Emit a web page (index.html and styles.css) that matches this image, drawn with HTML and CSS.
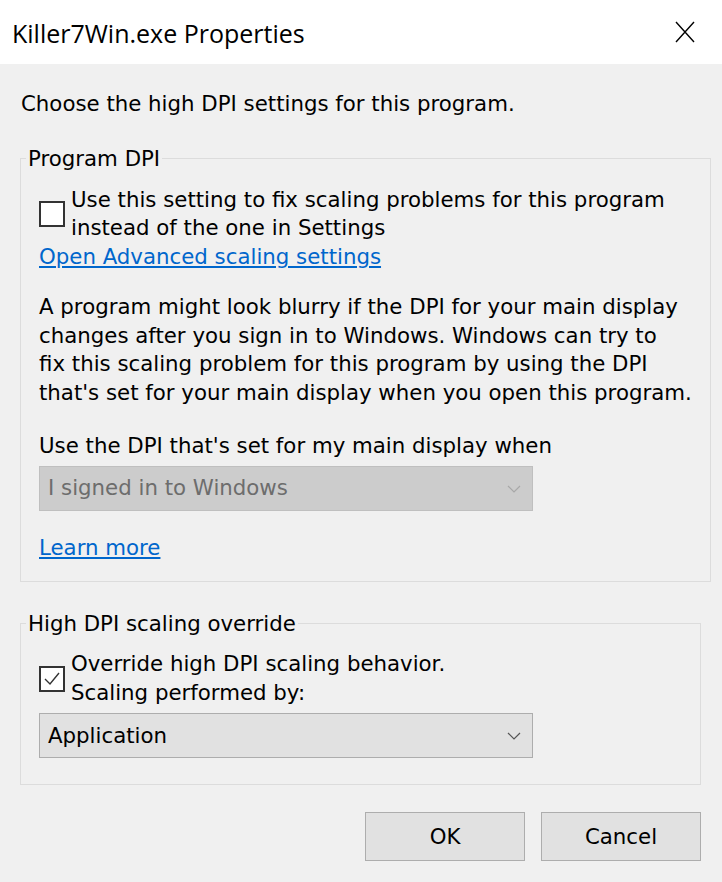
FILE: index.html
```html
<!DOCTYPE html>
<html>
<head>
<meta charset="utf-8">
<title>Killer7Win.exe Properties</title>
<link rel="stylesheet" href="styles.css">
</head>
<body>
<div class="dialog">
  <div class="titlebar">
    <span class="title">Killer7Win.exe Properties</span>
    <svg class="close" width="20" height="22" viewBox="0 0 20 22"><path d="M1 1 L19 21 M19 1 L1 21" stroke="#000" stroke-width="1.4" fill="none"/></svg>
  </div>
  <div class="content">
    <p class="intro">Choose the high DPI settings for this program.</p>
    <fieldset class="group group-dpi">
      <legend>Program DPI</legend>
      <label class="check">
        <span class="box"></span>
        <span class="check-text">Use this setting to fix scaling problems for this program<br>instead of the one in Settings</span>
      </label>
      <a class="link" href="#">Open Advanced scaling settings</a>
      <p class="para">A program might look blurry if the DPI for your main display<br>changes after you sign in to Windows. Windows can try to<br>fix this scaling problem for this program by using the DPI<br>that's set for your main display when you open this program.</p>
      <p class="label">Use the DPI that's set for my main display when</p>
      <div class="combo disabled">
        <span>I signed in to Windows</span>
        <svg width="14" height="8" viewBox="0 0 14 8"><path d="M1 1 L7 7 L13 1" stroke="#a8a8a8" stroke-width="1.2" fill="none"/></svg>
      </div>
      <a class="link learn" href="#">Learn more</a>
    </fieldset>
    <fieldset class="group group-override">
      <legend>High DPI scaling override</legend>
      <label class="check">
        <span class="box checked"><svg width="20" height="20" viewBox="0 0 20 20"><path d="M3 10 L8 15 L17 4" stroke="#333" stroke-width="1.4" fill="none"/></svg></span>
        <span class="check-text">Override high DPI scaling behavior.<br>Scaling performed by:</span>
      </label>
      <div class="combo">
        <span>Application</span>
        <svg width="14" height="8" viewBox="0 0 14 8"><path d="M1 1 L7 7 L13 1" stroke="#555" stroke-width="1.2" fill="none"/></svg>
      </div>
    </fieldset>
    <div class="buttons">
      <button class="btn">OK</button>
      <button class="btn">Cancel</button>
    </div>
  </div>
</div>
</body>
</html>
```

FILE: styles.css
```css
html, body {
  margin: 0;
  padding: 0;
}
body {
  width: 722px;
  height: 882px;
  background: #f0f0f0;
  font-family: "DejaVu Sans", sans-serif;
  font-size: 21.3px;
  line-height: 28.7px;
  color: #000;
  overflow: hidden;
}
.titlebar {
  height: 64px;
  background: #fff;
  display: flex;
  align-items: center;
  justify-content: space-between;
  padding: 0 27px 0 12px;
}
.title {
  font-family: "Open Sans", sans-serif;
  font-size: 25px;
  padding-top: 2px;
}
.close {
  display: block;
}
.content {
  padding: 26px 21px 0 20px;
}
.intro {
  margin: 0 0 25px 1px;
}
.group {
  border: 1px solid #dcdcdc;
  margin: 0;
  padding: 13px 18px 18px 18px;
}
.group legend {
  padding: 0 2px;
  margin-left: -13px;
  line-height: 29px;
}
.group-override {
  margin-top: 27px;
  padding-top: 12px;
  padding-bottom: 26px;
}
.check {
  display: flex;
  align-items: center;
  gap: 6px;
}
.box {
  width: 22px;
  height: 22px;
  border: 2px solid #333;
  background: #fff;
  flex: none;
  display: flex;
  align-items: center;
  justify-content: center;
}
.link {
  display: inline-block;
  color: #0066cc;
  text-decoration: underline;
}
.para {
  margin: 21px 0 0 0;
  white-space: nowrap;
}
.label {
  margin: 24px 0 0 0;
}
.combo {
  margin-top: 6px;
  height: 43px;
  border: 1px solid #adadad;
  background: #e1e1e1;
  display: flex;
  align-items: center;
  justify-content: space-between;
  padding: 0 11px 0 8px;
  box-sizing: content-box;
  width: 473px;
}
.combo.disabled {
  background: #cccccc;
  border-color: #bfbfbf;
  color: #6d6d6d;
}
.learn {
  margin-top: 23px;
}
.buttons {
  display: flex;
  justify-content: flex-end;
  gap: 16px;
  margin-top: 27px;
}
.btn {
  width: 160px;
  height: 49px;
  background: #e1e1e1;
  border: 1px solid #adadad;
  font-family: inherit;
  font-size: 21.3px;
  color: #000;
  padding: 0;
}
```
